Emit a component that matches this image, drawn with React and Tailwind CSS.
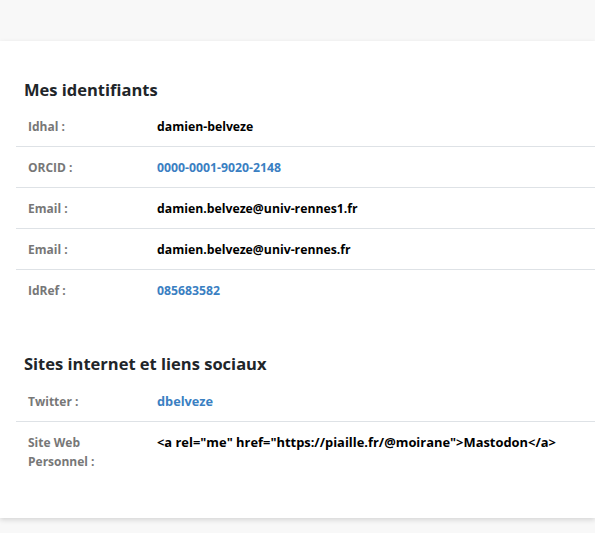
const identifiers = [
	{ label: "Idhal :", value: "damien-belveze" },
	{ label: "ORCID :", value: "0000-0001-9020-2148", link: true },
	{ label: "Email :", value: "damien.belveze@univ-rennes1.fr" },
	{ label: "Email :", value: "damien.belveze@univ-rennes.fr" },
	{ label: "IdRef :", value: "085683582", link: true },
]

const sites = [
	{ label: "Twitter :", value: "dbelveze", link: true, size: "text-[12.75px] " },
	{
		label: "Site Web Personnel :",
		value: '<a rel="me" href="https://piaille.fr/@moirane">Mastodon</a>',
		size: "text-[12.9px] ",
	},
]

function InfoRow({ row, last }) {
	return (
		<div className={"flex " + (last ? "" : "border-b border-[#dee2e6]")}>
			<div className="w-[129px] shrink-0 px-3 pt-[11px] pb-[10px] text-[12px] leading-[19px] font-bold text-[#777777]">
				{row.label}
			</div>
			<div
				className={
					"px-3 pt-[11px] pb-[10px] leading-[19px] font-bold " +
					(row.size || "text-[12.25px] ") +
					(row.link ? "text-[#3a80c2]" : "text-black")
				}
			>
				{row.value}
			</div>
		</div>
	)
}

function Section({ title, rows, className, rowsClass }) {
	return (
		<div className={className}>
			<h2 className="px-2 text-[16.5px] leading-[24px] font-bold text-[#212529]">
				{title}
			</h2>
			<div className={rowsClass}>
				{rows.map((row, i) => (
					<InfoRow key={i} row={row} last={i === rows.length - 1} />
				))}
			</div>
		</div>
	)
}

export default function App() {
	return (
		<div
			className="min-h-[533px] bg-[#f8f8f8] pt-[41px]"
			style={{ fontFamily: '"Open Sans", "Noto Sans", sans-serif' }}
		>
			<div className="bg-white pl-4 pt-[37px] pb-[37px] shadow-[0_2px_5px_rgba(0,0,0,0.14)]">
				<Section title="Mes identifiants" rows={identifiers} rowsClass="mt-1" />
				<Section
					title="Sites internet et liens sociaux"
					rows={sites}
					className="mt-[42px]"
					rowsClass="mt-[5px]"
				/>
			</div>
		</div>
	)
}
